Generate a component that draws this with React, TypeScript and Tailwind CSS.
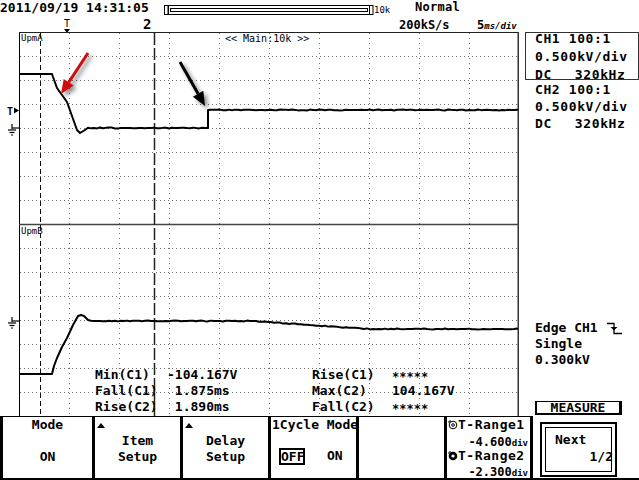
import React from "react";

function lcg(seed: number) {
  let s = seed >>> 0;
  return () => {
    s = (Math.imul(s, 1664525) + 1013904223) >>> 0;
    return s / 4294967296;
  };
}

function noisy(x0: number, x1: number, y: (x: number) => number, seed: number, amp = 0.45) {
  const r = lcg(seed);
  const pts: string[] = [];
  for (let x = x0; x <= x1; x += 3) {
    pts.push(`${x},${(y(x) + (r() - 0.5) * 2 * amp).toFixed(2)}`);
  }
  return pts.join(" ");
}

const hLines = [56, 80, 104, 128, 152, 176, 200, 248, 272, 296, 320, 344, 368, 392];
const vLines = [69, 119, 169, 219, 269, 319, 369, 419, 469];

function Ground({ y }: { y: number }) {
  return (
    <g stroke="#000" strokeWidth={1.2} fill="none">
      <line x1={12} y1={y - 4} x2={12} y2={y + 1} />
      <line x1={12} y1={y} x2={19} y2={y} />
      <line x1={8} y1={y + 2} x2={16} y2={y + 2} />
      <line x1={9.5} y1={y + 4.5} x2={14.5} y2={y + 4.5} />
      <line x1={11} y1={y + 7} x2={13} y2={y + 7} />
    </g>
  );
}

function Dial({ filled }: { filled?: boolean }) {
  return (
    <svg width="10" height="10" viewBox="0 0 10 10" className="shrink-0">
      {filled ? (
        <>
          <circle cx="5" cy="5" r="4.3" fill="#000" />
          <circle cx="5" cy="5" r="1.6" fill="#fff" />
          <path d="M1 1 L3 1 M1 1 L1 3" stroke="#000" strokeWidth="1" />
        </>
      ) : (
        <>
          <circle cx="5" cy="5" r="3.8" fill="none" stroke="#000" strokeWidth="1" />
          <circle cx="5" cy="5" r="1.3" fill="none" stroke="#000" strokeWidth="1" />
          <path d="M1 1 L3 1 M1 1 L1 3" stroke="#000" strokeWidth="1" />
        </>
      )}
    </svg>
  );
}

function UpTri() {
  return (
    <div className="absolute left-[2px] top-[6px] w-0 h-0 border-l-[4px] border-r-[4px] border-b-[5px] border-l-transparent border-r-transparent border-b-black" />
  );
}

export default function App() {
  const upper =
    "19,74 52,74 53,77 57,88 62,95 67,102 72,116 77,130 80,133 85,130 " +
    noisy(88, 205, () => 128, 7) +
    " 208,128 208,110 " +
    noisy(211, 517, () => 110, 11) +
    " 518,110";
  const lower =
    "19,374 52,374 54,366 57,358 62,347 67,338 73,325 78,316 81,315 84,316 88,320 " +
    noisy(91, 517, (x) => (x < 250 ? 321 : x < 370 ? 321 + ((x - 250) / 120) * 8 : 329), 23) +
    " 518,329";

  return (
    <div className="w-[639px] h-[480px] bg-white text-black overflow-hidden font-['DejaVu_Sans_Mono',monospace] font-bold">
      {/* header */}
      <div className="h-[32px] flex flex-col">
        <div className="h-[16px] flex items-start">
          <div className="w-[164px] text-[13px] leading-[16px] whitespace-nowrap">2011/09/19 14:31:05</div>
          <svg width="210" height="16" viewBox="164 0 210 16" className="shrink-0">
            <rect x="164.5" y="5.5" width="3.5" height="9" fill="none" stroke="#000" strokeWidth="1" />
            <rect x="168.5" y="5.5" width="201" height="9" fill="none" stroke="#000" strokeWidth="1" />
            <rect x="170.5" y="8.5" width="197" height="3" fill="none" stroke="#000" strokeWidth="1" />
            <rect x="369.5" y="5.5" width="3.5" height="9" fill="none" stroke="#000" strokeWidth="1" />
          </svg>
          <div className="w-[41px] text-[9px] leading-[10px] pt-[5px] font-normal">10k</div>
          <div className="text-[12px] leading-[14px] tracking-[0.3px]">Normal</div>
        </div>
        <div className="h-[16px] flex items-start">
          <div className="w-[63px]" />
          <div className="w-[8px] h-[16px] flex flex-col items-center">
            <div className="text-[10px] leading-[11px] mt-[2px] font-normal">T</div>
            <div className="w-0 h-0 border-l-[3px] border-r-[3px] border-t-[4px] border-l-transparent border-r-transparent border-t-black" />
          </div>
          <div className="w-[72px]" />
          <div className="w-[256px] text-[14px] leading-[16px]">2</div>
          <div className="w-[78px] text-[12px] leading-[16px] pt-[1px]">200kS/s</div>
          <div className="text-[12px] leading-[16px] pt-[1px] whitespace-nowrap">
            5<span className="text-[9px] italic">ms/div</span>
          </div>
        </div>
      </div>

      {/* middle */}
      <div className="flex h-[384px]">
        <div className="relative w-[519px] h-[384px]">
          <svg width="519" height="384" viewBox="0 32 519 384" className="block">
            <defs>
              <filter id="sh" x="-60%" y="-60%" width="220%" height="220%">
                <feDropShadow dx="3" dy="3" stdDeviation="2" floodColor="#000" floodOpacity="0.45" />
              </filter>
            </defs>
            {hLines.map((y) => (
              <line key={"h" + y} x1={20} y1={y + 0.5} x2={518} y2={y + 0.5} stroke="#6e6e6e" strokeWidth={1} strokeDasharray="1 3" />
            ))}
            {vLines.map((x) => (
              <line key={"v" + x} x1={x + 0.5} y1={33} x2={x + 0.5} y2={416} stroke="#6e6e6e" strokeWidth={1} strokeDasharray="1 4" />
            ))}
            {/* frame */}
            <line x1={19.5} y1={32} x2={19.5} y2={416} stroke="#000" strokeWidth={1} />
            <line x1={19} y1={32.5} x2={519} y2={32.5} stroke="#222" strokeWidth={1} />
            <line x1={518.25} y1={32} x2={518.25} y2={416} stroke="#333" strokeWidth={1.5} />
            <line x1={19} y1={224.5} x2={519} y2={224.5} stroke="#444" strokeWidth={1.6} />
            {/* cursors */}
            <line x1={40.5} y1={33} x2={40.5} y2={416} stroke="#111" strokeWidth={1} strokeDasharray="5 3" />
            <line x1={154.5} y1={33} x2={154.5} y2={416} stroke="#222" strokeWidth={1.5} strokeDasharray="12 3" />
            {/* traces */}
            <polyline points={upper} fill="none" stroke="#000" strokeWidth={2} strokeLinejoin="round" />
            <polyline points={lower} fill="none" stroke="#000" strokeWidth={2} strokeLinejoin="round" />
            {/* left markers */}
            <text x={7} y={115} fontSize={10} fontFamily="DejaVu Sans Mono" fontWeight="bold">T</text>
            <polygon points="14,107.5 19,110.5 14,113.5" fill="#000" />
            <Ground y={128} />
            <Ground y={321} />
            {/* arrows */}
            <g filter="url(#sh)">
              <line x1={88} y1={53} x2={68.7} y2={82.3} stroke="#cc1010" strokeWidth={3} />
              <polygon points="61,94 73.7,85.6 63.7,79" fill="#cc1010" />
            </g>
            <g filter="url(#sh)">
              <line x1={180} y1={62} x2={198.1} y2={93.8} stroke="#000" strokeWidth={3} />
              <polygon points="205,106 203.3,90.8 192.9,96.8" fill="#000" />
            </g>
          </svg>
          <div className="absolute left-[21px] top-[1px] text-[9px] leading-[10px] font-normal">UpmA</div>
          <div className="absolute left-[225px] top-[1px] text-[10px] leading-[12px] font-normal whitespace-nowrap">&lt;&lt; Main:10k &gt;&gt;</div>
          <div className="absolute left-[21px] top-[194px] text-[9px] leading-[10px] font-normal">UpmB</div>
          <div className="absolute left-[95px] top-[335px] grid grid-cols-[72px_145px_80px_100px] text-[13px] leading-[16px] whitespace-pre">
            <div>Min(C1)</div>
            <div>-104.167V</div>
            <div>Rise(C1)</div>
            <div className="h-[16px] text-[12px] leading-[21px]">*****</div>
            <div>Fall(C1)</div>
            <div> 1.875ms</div>
            <div>Max(C2)</div>
            <div>104.167V</div>
            <div>Rise(C2)</div>
            <div> 1.890ms</div>
            <div>Fall(C2)</div>
            <div className="h-[16px] text-[12px] leading-[21px]">*****</div>
          </div>
        </div>

        {/* right panel */}
        <div className="w-[120px] flex flex-col">
          <div className="ml-[6px] w-[114px] h-[48px] border border-[#333] pl-[9px] text-[13px] tracking-[0.6px]">
            <div className="flex flex-col gap-[6px] leading-[12px] whitespace-pre">
              <div>CH1 100:1</div>
              <div>0.500kV/div</div>
              <div className="flex">
                <span>DC</span>
                <span className="ml-[23px]">320kHz</span>
              </div>
            </div>
          </div>
          <div className="mt-[4px] pl-[16px] text-[13px] tracking-[0.6px] leading-[12px] flex flex-col gap-[5px] whitespace-pre">
            <div>CH2 100:1</div>
            <div>0.500kV/div</div>
            <div className="flex">
              <span>DC</span>
              <span className="ml-[23px]">320kHz</span>
            </div>
          </div>
          <div className="mt-[190px] pl-[16px] text-[13px] leading-[16px] whitespace-pre">
            <div className="flex items-start">
              <span>Edge CH1</span>
              <svg width="16" height="13" viewBox="0 0 16 13" className="ml-[9px] mt-[2px]">
                <path d="M0 1.5 H7 V11.5 H15" fill="none" stroke="#000" strokeWidth="1.3" />
                <polygon points="3.5,5 10.5,5 7,8.5" fill="#000" />
              </svg>
            </div>
            <div>Single</div>
            <div>0.300kV</div>
          </div>
          <div className="mt-[33px] ml-[16px] w-[87px] h-[14px] border-t border-b-2 border-l-2 border-r-[3px] border-black text-[13px] leading-[11px] text-center">
            MEASURE
          </div>
        </div>
      </div>

      {/* bottom menu */}
      <div className="flex h-[64px] border-b-2 border-black">
        <div className="flex w-[533px] border-t border-black text-[13px] leading-[16px]">
          <div className="w-[3px] bg-black" />
          <div className="w-[89px] flex flex-col items-center">
            <div>Mode</div>
            <div className="mt-[16px]">ON</div>
          </div>
          <div className="w-[3px] bg-black" />
          <div className="relative w-[85px] flex flex-col items-center pt-[16px]">
            <UpTri />
            <div>Item</div>
            <div>Setup</div>
          </div>
          <div className="w-[3px] bg-black" />
          <div className="relative w-[85px] flex flex-col items-center pt-[16px]">
            <UpTri />
            <div>Delay</div>
            <div>Setup</div>
          </div>
          <div className="w-[3px] bg-black" />
          <div className="relative w-[85px] flex flex-col items-start pl-[1px]">
            <div className="whitespace-nowrap">1Cycle Mode</div>
            <div className="flex items-start mt-[15px] ml-[7px]">
              <div className="w-[26px] h-[17px] border-2 border-black leading-[13px] text-center">OFF</div>
              <div className="ml-[22px] leading-[16px]">ON</div>
            </div>
          </div>
          <div className="w-[3px] bg-black" />
          <div className="w-[85px]" />
          <div className="w-[3px] bg-black" />
          <div className="w-[83px] flex flex-col overflow-hidden tracking-[0.5px]">
            <div className="flex items-center h-[15px] leading-[15px] pl-[1px]">
              <Dial />
              <span className="whitespace-nowrap">T-Range1</span>
            </div>
            <div className="h-[15px] leading-[15px] mt-[2px] text-right pr-[2px] whitespace-nowrap tracking-normal">
              <span className="text-[12px]">-4.600</span>
              <span className="text-[9px]">div</span>
            </div>
            <div className="flex items-center h-[15px] leading-[15px] -mt-[1px] pl-[1px]">
              <Dial filled />
              <span className="whitespace-nowrap">T-Range2</span>
            </div>
            <div className="h-[13px] leading-[13px] mt-[2px] text-right pr-[2px] whitespace-nowrap tracking-normal">
              <span className="text-[12px]">-2.300</span>
              <span className="text-[9px]">div</span>
            </div>
          </div>
          <div className="w-[3px] bg-black" />
        </div>
        <div className="flex-1">
          <div className="relative ml-[7px] mt-[6px] w-[77px] h-[55px] border-2 border-black text-[13px] leading-[16px]">
            <div className="absolute inset-[3px] border border-black" />
            <div className="pl-[13px] pt-[8px]">Next</div>
            <div className="text-right pr-[2px] mt-[1px]">1/2</div>
          </div>
        </div>
      </div>
    </div>
  );
}
